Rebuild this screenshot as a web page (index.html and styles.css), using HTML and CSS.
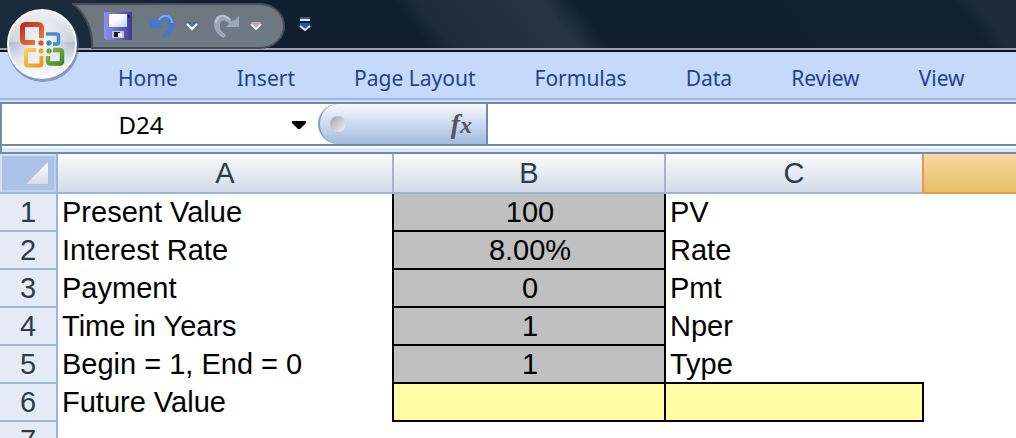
FILE: index.html
```html
<!DOCTYPE html>
<html lang="en">
<head>
<meta charset="utf-8">
<title>Workbook</title>
<link rel="stylesheet" href="styles.css">
</head>
<body>
<div class="app">
  <header class="titlebar">
    <button class="orb" aria-label="Office menu">
      <svg width="80" height="80" viewBox="0 0 80 80">
        <defs>
          <linearGradient id="ball" x1="0" y1="0" x2="0" y2="1">
            <stop offset="0" stop-color="#eef0f5"/><stop offset=".46" stop-color="#cdd3e0"/>
            <stop offset=".48" stop-color="#b3bdd1"/><stop offset=".7" stop-color="#dde1ea"/><stop offset="1" stop-color="#fff"/>
          </linearGradient>
          <radialGradient id="glow"><stop offset="0" stop-color="#fff"/><stop offset=".5" stop-color="#fff" stop-opacity=".5"/><stop offset="1" stop-color="#fff" stop-opacity="0"/></radialGradient>
          <linearGradient id="red" x1="0" y1="0" x2="1" y2="1"><stop offset="0" stop-color="#b93012"/><stop offset="1" stop-color="#f0803a"/></linearGradient>
          <linearGradient id="gold" x1="0" y1="0" x2="1" y2="1"><stop offset="0" stop-color="#f9cf52"/><stop offset="1" stop-color="#ee9420"/></linearGradient>
          <linearGradient id="green" x1="0" y1="0" x2="1" y2="1"><stop offset="0" stop-color="#8cb84a"/><stop offset="1" stop-color="#3f8a22"/></linearGradient>
        </defs>
        <circle cx="39" cy="41" r="36" fill="#51688e" opacity=".55"/>
        <circle cx="38" cy="39" r="34" fill="url(#ball)" stroke="#f6f8fc" stroke-width="2"/>
        <ellipse cx="38" cy="40" rx="28" ry="26" fill="url(#glow)"/>
        <g fill="none" stroke-linejoin="round">
          <path d="M31 37.5H21.5a3 3 0 0 1-3-3V22.5a3 3 0 0 1 3-3H34.5a3 3 0 0 1 3 3V33" stroke="url(#red)" stroke-width="5"/>
          <path d="M42 29H52.500a2 2 0 0 1 2 2V37a2 2 0 0 1-2 2H49" stroke="#458fce" stroke-width="3.500"/>
          <path d="M32 45H24a2 2 0 0 0-2 2V58.500a2 2 0 0 0 2 2H35.500a2 2 0 0 0 2-2V51" stroke="url(#gold)" stroke-width="4"/>
          <path d="M49 45H56a2 2 0 0 1 2 2V56.500a2 2 0 0 1-2 2H46a2 2 0 0 1-2-2V51" stroke="url(#green)" stroke-width="4.500"/>
        </g>
        <g stroke="#fff" stroke-width="1">
          <circle cx="37" cy="38" r="3.300" fill="#e35224"/><circle cx="45" cy="38" r="3.300" fill="#3c82c7"/>
          <circle cx="37" cy="46" r="3.300" fill="#f2a535"/><circle cx="45" cy="46" r="3.300" fill="#6ba43a"/>
        </g>
      </svg>
    </button>
    <div class="quick">
      <svg class="quick-shape" width="216" height="48" viewBox="0 0 216 48">
        <defs><linearGradient id="pill" x1="0" y1="0" x2="0" y2="1"><stop offset="0" stop-color="#6d7580"/><stop offset="1" stop-color="#6d7c87"/></linearGradient></defs>
        <path d="M1 2H187C203 2 212 13 212 24S203 46 187 46H20C21 27 13 11 1 2Z" fill="url(#pill)" stroke="#4a4d59" stroke-width="2"/>
      </svg>
      <button class="tool" aria-label="Save">
        <svg width="28" height="28" viewBox="0 0 28 28">
          <defs><linearGradient id="disk"><stop offset="0" stop-color="#8d92e8"/><stop offset=".6" stop-color="#6460c4"/><stop offset="1" stop-color="#3e3891"/></linearGradient><linearGradient id="label" x1="0" y1="0" x2="1" y2="1"><stop offset=".4" stop-color="#fff"/><stop offset="1" stop-color="#b9d2f4"/></linearGradient></defs>
          <path d="M0 0H28V28H2L0 26Z" fill="url(#disk)"/><path d="M5 2H23V15H5Z" fill="url(#label)"/><path d="M24 3h2v3h-2Z" fill="#26236c"/>
          <path d="M8 19H20V26H8Z" fill="#bfc4cc"/><path d="M10 20h6v5h-6Z" fill="#15151c"/><path d="M14 21h4v4h-4Z" fill="#eee"/>
        </svg>
      </button>
      <button class="tool undo" aria-label="Undo">
        <svg width="26" height="28" viewBox="0 0 26 28"><path d="M8 9C12 0 24 1 24 12C24 19 20 24 13 26V23C17 20 19 17 18 12C17 7 13 8 10 12L13 16H0V5L4 8Z" fill="#4577d2"/><path d="M9 8C12 3 21 1 22 11" fill="none" stroke="#83a9ee" stroke-width="2"/></svg>
      </button>
      <button class="tool more" aria-label="Undo history">
        <svg width="12" height="10" viewBox="0 0 12 10"><path d="M1 1H11L6 7Z" fill="#3f70b2"/><path d="M1 3L6 8L11 3" fill="none" stroke="#fff" stroke-width="2"/></svg>
      </button>
      <button class="tool redo" aria-label="Redo">
        <svg width="26" height="28" viewBox="0 0 26 28"><path d="M17 9C13 0 0 1 0 12C0 19 5 24 10 26L12 23C8 20 5 17 6 12C7 7 12 8 15 12L12 15H25V4L21 8Z" fill="#9aa8bb"/><path d="M16 8C12 3 3 1 2 11" fill="none" stroke="#bcc6d3" stroke-width="2"/></svg>
      </button>
      <button class="tool more" aria-label="Redo options">
        <svg width="12" height="10" viewBox="0 0 12 10"><path d="M1 1H11L6 7Z" fill="#b5b1ad"/><path d="M1 3L6 8L11 3" fill="none" stroke="#f1eee9" stroke-width="2"/></svg>
      </button>
    </div>
    <button class="tool customize" aria-label="Customize toolbar">
      <svg width="12" height="16" viewBox="0 0 12 16"><path d="M1 0H11V2H1Z" fill="#2f5ba5"/><path d="M1 2H11V4H1Z" fill="#e4e4e4"/><path d="M1 6H11V8L6 13L1 8Z" fill="#2856a5"/><path d="M1 9L6 13L11 9" fill="none" stroke="#e4e4e4" stroke-width="2"/></svg>
    </button>
  </header>
  <nav class="ribbon">
    <button>Home</button><button>Insert</button><button>Page Layout</button><button>Formulas</button><button>Data</button><button>Review</button><button>View</button>
  </nav>
  <div class="formula-bar">
    <div class="name-box">
      <input class="name-input" type="text" value="D24" aria-label="Name box">
      <button class="name-arrow" aria-label="Show names"><svg width="14" height="8" viewBox="0 0 14 8"><path d="M0 0H14V2L8 8H6L0 2Z"/></svg></button>
    </div>
    <div class="function">
      <span class="knob"></span>
      <button class="fx" aria-label="Insert function"><span class="f">f</span><span class="x">x</span></button>
    </div>
    <input class="formula" type="text" aria-label="Formula">
  </div>
  <table class="sheet">
    <colgroup><col class="col-num"><col class="col-a"><col class="col-b"><col class="col-c"><col></colgroup>
    <thead>
      <tr><th class="corner"><svg width="22" height="22" viewBox="0 0 22 22"><defs><linearGradient id="tri" x1="0" y1="0" x2="0" y2="1"><stop offset="0" stop-color="#fff"/><stop offset="1" stop-color="#d9dbe0"/></linearGradient></defs><path d="M22 0V22H0Z" fill="url(#tri)"/></svg></th><th>A</th><th>B</th><th class="before-active">C</th><th class="active"></th></tr>
    </thead>
    <tbody>
      <tr><th>1</th><td class="edge">Present Value</td><td class="input">100</td><td>PV</td><td></td></tr>
      <tr><th>2</th><td class="edge">Interest Rate</td><td class="input">8.00%</td><td>Rate</td><td></td></tr>
      <tr><th>3</th><td class="edge">Payment</td><td class="input">0</td><td>Pmt</td><td></td></tr>
      <tr><th>4</th><td class="edge">Time in Years</td><td class="input">1</td><td>Nper</td><td></td></tr>
      <tr><th>5</th><td class="edge">Begin = 1, End = 0</td><td class="input">1</td><td class="above">Type</td><td></td></tr>
      <tr><th>6</th><td class="edge">Future Value</td><td class="result"></td><td class="result"></td><td></td></tr>
      <tr><th>7</th><td></td><td></td><td></td><td></td></tr>
    </tbody>
  </table>
</div>
</body>
</html>
```
FILE: styles.css
```css
* { box-sizing: border-box; }
body { margin: 0; background: #fff; font-family: "Liberation Sans", Arial, sans-serif; }
button { padding: 0; border: 0; background: none; font: inherit; color: inherit; }
input { min-width: 0; border: 0; outline: 0; }
svg { display: block; }

.app { height: 100vh; overflow: hidden; }

.titlebar {
  position: relative;
  display: flex;
  height: 52px;
  padding-left: 72px;
  border-bottom: 2px solid #0b1322;
  box-shadow: inset 0 -2px #9d9faa;
  background: linear-gradient(52deg, #1c2b3b 0, #1c2b3b 12%, #102030 24%, #102030 41%, #1d2b3a 43%, #263442 55%, #102030 58%, #112131 94%, #1d2b3b 96%);
}
.orb { position: absolute; left: 4px; top: 5px; z-index: 2; border-radius: 50%; }
.quick { position: relative; display: flex; align-items: center; width: 216px; height: 52px; padding: 0 0 0 32px; }
.quick-shape { position: absolute; left: 0; top: 2px; }
.tool { position: relative; }
.undo { margin-left: 18px; }
.more { margin-left: 10px; }
.redo { margin-left: 16px; }
.customize { margin-left: 11px; }

.ribbon {
  display: flex;
  align-items: center;
  gap: 59px;
  height: 50px;
  padding: 4px 0 0 118px;
  border-bottom: 2px solid #d3e0f5;
  box-shadow: inset 0 -2px #9db8de;
  background: #c5dafb;
  color: #23418c;
  font-family: "Noto Sans", "Open Sans", sans-serif;
  font-size: 21px;
  line-height: 30px;
  white-space: nowrap;
}

.formula-bar {
  display: flex;
  height: 52px;
  border-top: 2px solid #6d8cb2;
  border-bottom: 2px solid #6d8cb2;
  border-left: 2px solid #6d8cb2;
  background: linear-gradient(#fff 40px, #6d8cb2 40px, #6d8cb2 42px, #fff 42px, #fff 44px, #dbe6f6 44px);
}
.name-box { display: flex; align-items: center; width: 316px; height: 40px; padding-right: 12px; }
.name-input {
  flex: 1;
  padding: 2px 12px 0 0;
  background: none;
  text-align: center;
  font: 24px/32px "Noto Sans", sans-serif;
}
.name-arrow { padding-top: 2px; }
.function {
  display: flex;
  align-items: center;
  justify-content: space-between;
  width: 170px;
  height: 40px;
  padding: 0 14px 0 10px;
  border-left: 2px solid #809dc1;
  border-right: 2px solid #6d8cb2;
  border-radius: 20px 0 0 20px;
  background: linear-gradient(#f7fafe, #cbdaef 50%, #a3bbdf);
}
.knob { width: 16px; height: 16px; border-radius: 50%; background: linear-gradient(135deg, #a2a3a9, #f4f5f7); }
.fx { color: #55565a; font: italic bold 28px/28px "Liberation Serif", serif; }
.x { font-size: 24px; }
.formula { flex: 1; height: 40px; background: none; font-size: 24px; }

.sheet { width: 100%; table-layout: fixed; border-collapse: separate; border-spacing: 0; font-size: 29px; line-height: 36px; }
.col-num { width: 58px; }
.col-a { width: 336px; }
.col-b { width: 272px; }
.col-c { width: 258px; }
.sheet th, .sheet td { height: 38px; padding: 0; white-space: nowrap; }
.sheet th { border-right: 2px solid #a0b5cf; border-bottom: 2px solid #a0b5cf; color: #2d3c48; font-weight: 400; }
.sheet thead th { height: 40px; background: linear-gradient(#f9fbfd, #d3dbe7); }
.sheet tbody th { background: #e4ebf6; }
.sheet thead .corner { padding: 0 8px 0 26px; box-shadow: inset 2px 2px #d5e1f6, inset -2px -2px #bdd2f3; background: #adc2e7; }
.sheet thead .before-active { border-right-color: #e9984a; }
.sheet thead .active { border-right: 0; border-bottom-color: #e9984a; background: linear-gradient(#f5d9a3, #e8bf68); }
.sheet td { padding: 0 0 2px 4px; color: #000; }
.sheet .edge { border-right: 2px solid #000; }
.sheet tbody .input { padding: 0 0 0 2px; border-right: 2px solid #000; border-bottom: 2px solid #000; background: #c0c0c0; text-align: center; }
.sheet tbody .above { padding-bottom: 0; border-bottom: 2px solid #000; }
.sheet .result { border-right: 2px solid #000; border-bottom: 2px solid #000; background: #fffca4; }
```
